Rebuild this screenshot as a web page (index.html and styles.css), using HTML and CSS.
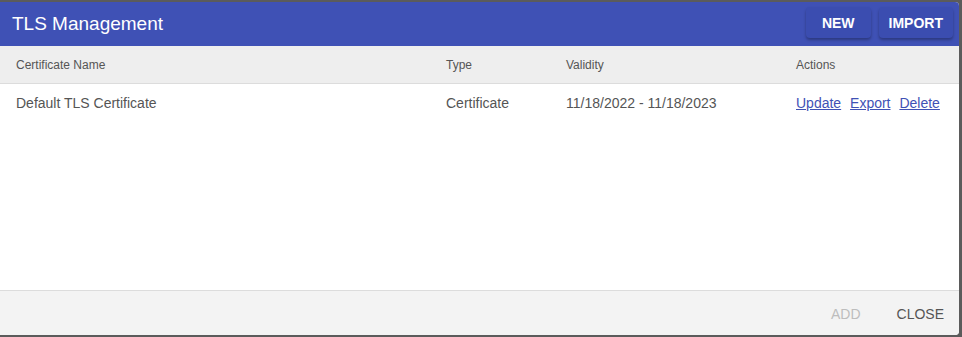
FILE: index.html
```html
<!DOCTYPE html>
<html lang="en">

<head>
    <meta charset="UTF-8">
    <title>TLS Management</title>
    <link rel="stylesheet" href="styles.css">
</head>

<body>
<div class="dialog">
    <header class="dialog-header">
        <h1>TLS Management</h1>
        <div class="header-actions">
            <button class="raised">NEW</button>
            <button class="raised">IMPORT</button>
        </div>
    </header>
    <div class="dialog-body">
        <table class="cert-table">
            <thead>
                <tr>
                    <th class="col-name">Certificate Name</th>
                    <th class="col-type">Type</th>
                    <th class="col-validity">Validity</th>
                    <th>Actions</th>
                </tr>
            </thead>
            <tbody>
                <tr>
                    <td>Default TLS Certificate</td>
                    <td>Certificate</td>
                    <td>11/18/2022 - 11/18/2023</td>
                    <td class="links">
                        <a href="#">Update</a>
                        <a href="#">Export</a>
                        <a href="#">Delete</a>
                    </td>
                </tr>
            </tbody>
        </table>
    </div>
    <footer class="dialog-footer">
        <button class="flat" disabled>ADD</button>
        <button class="flat">CLOSE</button>
    </footer>
</div>
</body>

</html>
```

FILE: styles.css
```css
body {
    font-family: 'Liberation Sans', Arial, sans-serif;
    margin: 0;
    padding: 0;
    background-color: #5b5b5b;
}

.dialog {
    margin-top: 2px;
    width: 959px;
    height: 333px;
    background-color: #fff;
    border-radius: 0 4px 4px 0;
    overflow: hidden;
    display: flex;
    flex-direction: column;
}

.dialog-header {
    background-color: #3f51b5;
    color: #fff;
    height: 44px;
    display: flex;
    align-items: center;
    justify-content: space-between;
    padding: 0 6px 0 12px;
}

.dialog-header h1 {
    margin: 0;
    font-size: 19px;
    font-weight: normal;
}

.header-actions {
    display: flex;
    gap: 8px;
    margin-top: -3px;
}

button {
    font-family: 'Liberation Sans', Arial, sans-serif;
    cursor: pointer;
    border: none;
    background: none;
}

.raised {
    background-color: #3b4db0;
    color: #fff;
    font-size: 14px;
    font-weight: bold;
    height: 31px;
    padding: 0 16px;
    border-radius: 4px;
    box-shadow: 0 2px 3px rgba(0, 0, 0, 0.3);
}

.raised + .raised {
    padding: 0 10px;
}

.dialog-body {
    flex: 1;
}

.cert-table {
    width: 100%;
    border-collapse: collapse;
    color: #555;
}

.cert-table th {
    background-color: #eeeeee;
    font-size: 12px;
    font-weight: normal;
    text-align: left;
    height: 37px;
    padding: 0;
    border-bottom: 1px solid #dcdcdc;
}

.cert-table td {
    font-size: 14px;
    padding: 0;
    height: 37px;
}

.cert-table th:first-child,
.cert-table td:first-child {
    padding-left: 16px;
}

.col-name {
    width: 430px;
}

.col-type {
    width: 120px;
}

.col-validity {
    width: 230px;
}

.links a {
    color: #3f51b5;
    margin-right: 5px;
}

.dialog-footer {
    background-color: #f3f3f3;
    border-top: 1px solid #dcdcdc;
    height: 44px;
    display: flex;
    justify-content: flex-end;
    align-items: center;
    padding-right: 7px;
    gap: 4px;
}

.flat {
    font-size: 14px;
    color: #555;
    padding: 6px 8px;
    margin-top: 2px;
}

.flat:disabled {
    color: #bdbdbd;
    cursor: default;
    margin-right: 16px;
}
```
